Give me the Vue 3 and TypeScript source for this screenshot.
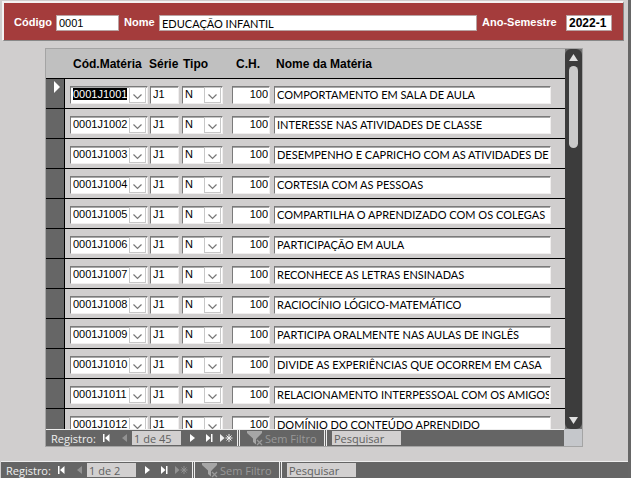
<script setup lang="ts">
import { onMounted, ref } from 'vue'

interface Subject {
  code: string
  name: string
}

const names: string[] = [
  'COMPORTAMENTO EM SALA DE AULA',
  'INTERESSE NAS ATIVIDADES DE CLASSE',
  'DESEMPENHO E CAPRICHO COM AS ATIVIDADES DE',
  'CORTESIA COM AS PESSOAS',
  'COMPARTILHA O APRENDIZADO COM OS COLEGAS',
  'PARTICIPAÇÃO EM AULA',
  'RECONHECE AS LETRAS ENSINADAS',
  'RACIOCÍNIO LÓGICO-MATEMÁTICO',
  'PARTICIPA ORALMENTE NAS AULAS DE INGLÊS',
  'DIVIDE AS EXPERIÊNCIAS QUE OCORREM EM CASA',
  'RELACIONAMENTO INTERPESSOAL COM OS AMIGOS',
  'DOMÍNIO DO CONTEÚDO APRENDIDO',
]

const subjects: Subject[] = names.map((name, i) => ({ code: `0001J${1001 + i}`, name }))

const navs = [
  { id: 'inner', position: '1 de 45', canAdd: true },
  { id: 'outer', position: '1 de 2', canAdd: false },
]

const grid = ref<HTMLTableElement | null>(null)

onMounted(() => {
  const first = grid.value?.querySelector<HTMLInputElement>('input')
  first?.focus()
  first?.select()
})
</script>

<template>
  <div class="window">
    <header class="banner">
      <label for="codigo">Código</label>
      <input id="codigo" class="box code" value="0001" />
      <label for="nome" class="nome-label">Nome</label>
      <input id="nome" class="box name" value="EDUCAÇÃO INFANTIL" />
      <label for="semestre" class="sem-label">Ano-Semestre</label>
      <input id="semestre" class="box sem" value="2022-1" />
    </header>

    <section class="subform">
      <div class="body">
        <div class="viewport">
          <table ref="grid">
            <colgroup>
              <col class="c-sel" /><col class="c-code" /><col class="c-serie" />
              <col class="c-tipo" /><col class="c-ch" /><col />
            </colgroup>
            <thead>
              <tr>
                <th colspan="2" class="h-code">Cód.Matéria</th>
                <th>Série</th>
                <th class="h-tipo">Tipo</th>
                <th class="h-ch">C.H.</th>
                <th class="h-name">Nome da Matéria</th>
              </tr>
            </thead>
            <tbody>
              <tr v-for="(s, i) in subjects" :key="s.code">
                <td class="selector">
                  <svg v-if="i === 0" width="6" height="12" viewBox="0 0 6 12"><path d="M0 0L6 6L0 12Z" fill="#fff" /></svg>
                </td>
                <td class="p-code">
                  <div class="field">
                    <input :value="s.code" aria-label="Cód.Matéria" />
                    <button type="button" class="drop" aria-label="Abrir lista">
                      <svg width="9" height="6" viewBox="0 0 9 6"><path d="M.5 .5L4.5 4.5L8.5 .5" fill="none" stroke="#777" stroke-width="1.2" /></svg>
                    </button>
                  </div>
                </td>
                <td class="p-serie"><div class="field"><input value="J1" aria-label="Série" /></div></td>
                <td class="p-tipo">
                  <div class="field">
                    <select aria-label="Tipo"><option>N</option></select>
                    <span class="drop">
                      <svg width="9" height="6" viewBox="0 0 9 6"><path d="M.5 .5L4.5 4.5L8.5 .5" fill="none" stroke="#777" stroke-width="1.2" /></svg>
                    </span>
                  </div>
                </td>
                <td class="p-ch"><div class="field"><input class="num" value="100" aria-label="C.H." /></div></td>
                <td class="p-name"><div class="field"><input :value="s.name" aria-label="Nome da Matéria" /></div></td>
              </tr>
            </tbody>
          </table>
        </div>
        <div class="scroll">
          <div class="track">
            <button type="button" aria-label="Rolar para cima">
              <svg width="9" height="7" viewBox="0 0 9 7"><path d="M4.5 0L9 7H0Z" fill="#e0e0e0" /></svg>
            </button>
            <div class="thumb"></div>
            <button type="button" class="down" aria-label="Rolar para baixo">
              <svg width="9" height="7" viewBox="0 0 9 7"><path d="M0 0H9L4.5 7Z" fill="#e0e0e0" /></svg>
            </button>
          </div>
        </div>
      </div>
    </section>

    <nav v-for="n in navs" :key="n.id" :class="['records', n.id]">
      <div class="strip">
        <label :for="`pos-${n.id}`" class="caption">Registro:</label>
        <button type="button" class="first" aria-label="Primeiro">
          <svg width="7" height="8" viewBox="0 0 7 8"><path d="M0 0H1.5V8H0ZM6.5 0V8L2 4Z" fill="#fff" /></svg>
        </button>
        <button type="button" class="prev" aria-label="Anterior">
          <svg width="5" height="8" viewBox="0 0 5 8"><path d="M5 0V8L0 4Z" fill="#929292" /></svg>
        </button>
        <input :id="`pos-${n.id}`" class="position" :value="n.position" />
        <button type="button" class="next" aria-label="Próximo">
          <svg width="5" height="8" viewBox="0 0 5 8"><path d="M0 0V8L5 4Z" fill="#fff" /></svg>
        </button>
        <button type="button" class="last" aria-label="Último">
          <svg width="7" height="8" viewBox="0 0 7 8"><path d="M0 0V8L4.5 4ZM5 0H6.5V8H5Z" fill="#fff" /></svg>
        </button>
        <button type="button" class="add" aria-label="Novo registro">
          <svg width="13" height="8" viewBox="0 0 13 8" :class="{ off: !n.canAdd }">
            <path d="M0 0V8L4.5 4Z" fill="currentColor" />
            <path d="M9 0V8M5.5 4H12.500M6.500 1.500L11.500 6.500M11.500 1.500L6.500 6.500" fill="none" stroke="currentColor" />
          </svg>
        </button>
        <span class="divider"></span>
        <button type="button" class="filter">
          <svg width="16" height="15" viewBox="0 0 16 15">
            <path d="M0 0H15V2L9.500 7.500V14L6 11V7.500L0 2Z" fill="#a6a6a6" />
            <path d="M9 8H16V15H9Z" fill="#656565" />
            <path d="M10 9L15 14M15 9L10 14" stroke="#999" stroke-width="1.300" />
          </svg>
          Sem Filtro
        </button>
        <span class="divider"></span>
        <input class="search" value="Pesquisar" aria-label="Pesquisar" />
      </div>
      <span class="corner"></span>
    </nav>
  </div>
</template>

<style>
body {
  background: #d0cece;
}
</style>

<style scoped>
* {
  box-sizing: border-box;
}

.window {
  display: flex;
  flex-direction: column;
  height: 100vh;
  padding-top: 1px;
  border-right: 3px solid #666;
  background: #d0cece;
  font-family: "Liberation Sans", Arial, sans-serif;
  font-size: 11px;
  color: #000;
}

input,
select,
button {
  min-width: 0;
  margin: 0;
  padding: 0;
  border: 0;
  border-radius: 0;
  outline: 0;
  background: transparent;
  color: inherit;
  font: inherit;
}

input::selection {
  background: #000;
  color: #fff;
}

svg {
  display: block;
  flex: none;
}

.banner {
  display: flex;
  align-items: flex-start;
  flex: none;
  height: 40px;
  margin: 0 4px 0 2px;
  padding: 12px 11px 0 10px;
  border: 2px solid #f4f2f2;
  border-right-color: #888;
  border-bottom-color: #888;
  border-right-width: 1px;
  border-bottom-width: 1px;
  background: #a43c3c;
  color: #fff;
  font-weight: bold;
}

.banner label {
  flex: none;
  line-height: 14px;
  width: 42px;
}

.banner .nome-label {
  width: 35px;
  margin-left: 5px;
}

.banner .sem-label {
  width: 84px;
  margin-left: 5px;
}

.box {
  height: 16px;
  padding: 0 2px;
  border: 1px solid #b9a3a3;
  background: #fff;
  color: #000;
  font-weight: normal;
}

.box.code {
  width: 63px;
}

.box.name {
  flex: 1;
  font-family: Lato, "Liberation Sans", sans-serif;
}

.box.sem {
  width: 46px;
  font-size: 12px;
  font-weight: bold;
}

.subform {
  display: flex;
  flex: 1;
  min-height: 0;
  margin: 7px 45px 0 45px;
  border: 1px solid #a4a4a4;
  border-bottom: 0;
}

.body {
  display: flex;
  flex: 1;
  min-width: 0;
}

.viewport {
  flex: 1;
  min-width: 0;
  overflow: hidden;
}

table {
  width: 100%;
  table-layout: fixed;
  border-spacing: 0;
}

.c-sel {
  width: 19px;
}

.c-code {
  width: 84px;
}

.c-serie {
  width: 32px;
}

.c-tipo {
  width: 44px;
}

.c-ch {
  width: 46px;
}

th {
  height: 30px;
  padding: 0;
  border-bottom: 1px solid #000;
  background: #c0c0c0;
  font-size: 12px;
  text-align: left;
  white-space: nowrap;
}

.h-code {
  padding-left: 27px;
}

.h-tipo {
  padding-left: 2px;
}

.h-ch {
  padding-left: 11px;
}

.h-name {
  padding-left: 5px;
}

td {
  height: 30px;
  padding: 7px 0 3px;
  border-bottom: 1px solid #000;
  vertical-align: top;
}

.selector {
  padding: 2px 0 0 8px;
  border-right: 1px solid #000;
  background: #666;
}

.p-code {
  padding-left: 5px;
  padding-right: 1px;
}

.p-serie {
  padding-left: 1px;
  padding-right: 2px;
}

.p-tipo {
  padding-left: 1px;
  padding-right: 2px;
}

.p-ch {
  padding-left: 7px;
  padding-right: 1px;
}

.p-name {
  padding-left: 3px;
  padding-right: 14px;
  font-family: Lato, "Liberation Sans", sans-serif;
}

.field {
  display: flex;
  height: 18px;
  padding: 0 1px 0 2px;
  border: 1px solid #f0eeee;
  border-top-color: #7a7a7a;
  border-left-color: #7a7a7a;
  background: #fff;
  box-shadow: inset 0 1px #a8a8a8;
}

.field input,
.field select {
  flex: 1;
  width: 100%;
  height: 14px;
  appearance: none;
}

.field .num {
  text-align: right;
}

.drop {
  display: flex;
  flex: none;
  align-items: flex-end;
  justify-content: center;
  width: 17px;
  height: 16px;
  padding-bottom: 2px;
  border: 1px solid #c8c8c8;
  background: #fff;
  pointer-events: none;
}

.scroll {
  display: flex;
  flex: none;
  width: 17px;
  background: #707070;
}

.track {
  display: flex;
  flex: 1;
  flex-direction: column;
  align-items: center;
  border-radius: 6px;
  background: #3c3c3c;
}

.scroll button {
  display: flex;
  flex: none;
  align-items: center;
  justify-content: center;
  width: 17px;
  height: 17px;
}

.scroll .down {
  margin-top: auto;
}

.thumb {
  flex: none;
  width: 9px;
  height: 82px;
  border-radius: 5px;
  background: #cacaca;
}

.records {
  display: flex;
  flex: none;
  height: 18px;
  font-family: "Open Sans", "Noto Sans", sans-serif;
  font-size: 11px;
  color: #f0f0f0;
}

.inner {
  margin: 0 45px 14px 45px;
  border: 1px solid #a4a4a4;
  border-top: 0;
}

.outer {
  height: 17px;
  margin-left: 1px;
}

.strip {
  display: flex;
  flex: 1;
  align-items: center;
  min-width: 0;
  border-top: 1px solid #eee;
  background: #656565;
  white-space: nowrap;
}

.caption {
  width: 52px;
  padding-left: 5px;
}

.strip button {
  display: flex;
  flex: none;
  align-items: center;
  height: 16px;
}

.first {
  width: 19px;
  margin-left: 5px;
}

.prev {
  width: 10px;
}

.strip .position,
.strip .search {
  height: 14px;
  background: #d2d0d0;
  color: #606060;
}

.strip .position {
  width: 49px;
  padding: 0 2px;
}

.strip .next {
  width: 16px;
  margin-left: 9px;
}

.last {
  width: 14px;
}

.add {
  width: 17px;
}

.off {
  color: #929292;
}

.divider {
  flex: none;
  width: 3px;
  height: 16px;
  border: 1px solid #eee;
  border-width: 0 1px;
  background: #656565;
}

.strip .filter {
  width: 84px;
  padding-left: 7px;
  gap: 2px;
  color: #999;
}

.strip .search {
  width: 69px;
  margin-left: 5px;
  padding: 0 2px;
}

.corner {
  flex: none;
  width: 18px;
  background: #c5c7cb;
}

.outer .corner {
  display: none;
}
</style>
